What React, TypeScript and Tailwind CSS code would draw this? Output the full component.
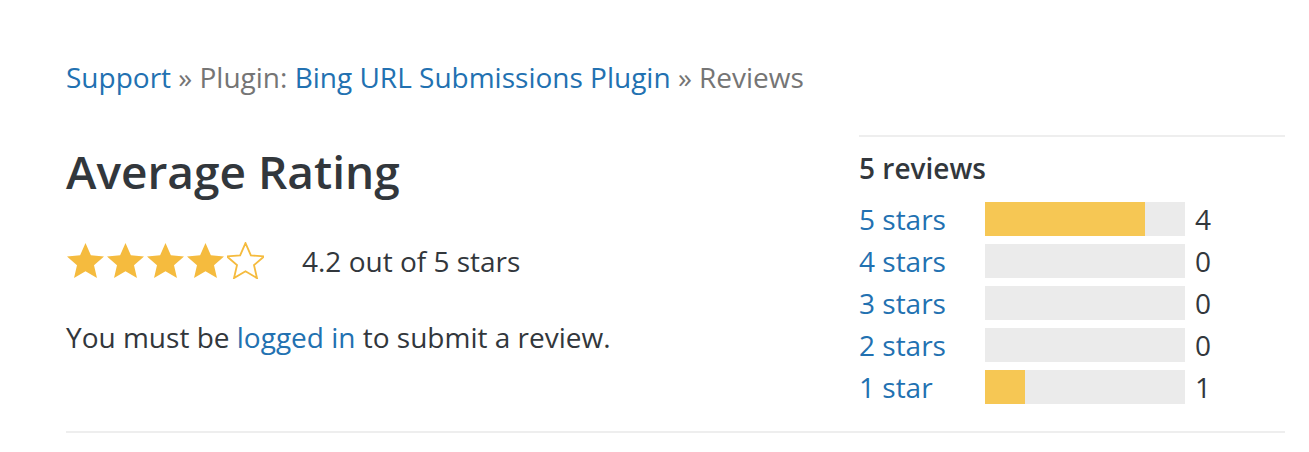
import React from "react";

const ratings = [
  { label: "5 stars", count: 4 },
  { label: "4 stars", count: 0 },
  { label: "3 stars", count: 0 },
  { label: "2 stars", count: 0 },
  { label: "1 star", count: 1 },
];

const Star: React.FC<{ filled: boolean }> = ({ filled }) => (
  <svg width="37" height="37" viewBox="2 1.6 20 20" className="block">
    <path
      d="M12 2.2l2.9 6.6 7.1.6-5.4 4.7 1.6 7-6.2-3.7-6.2 3.7 1.6-7L2 9.4l7.1-.6z"
      fill={filled ? "#f5bb3e" : "none"}
      stroke="#f5bb3e"
      strokeWidth={filled ? 0 : 1}
      strokeLinejoin="miter"
    />
  </svg>
);

export default function App() {
  const total = ratings.reduce((s, r) => s + r.count, 0);
  return (
    <div className="w-[1309px] h-[452px] bg-white pl-[66px] pr-[24px] pt-[57px] font-['Open_Sans',sans-serif] text-[#32373c]">
      <nav className="text-[28px] leading-[40px] text-[#757575]">
        <a className="text-[#2271b1]">Support</a> » Plugin:{" "}
        <a className="text-[#2271b1]">Bing URL Submissions Plugin</a> » Reviews
      </nav>

      <div className="flex justify-between mt-[38px]">
        <div className="pt-[6px]">
          <h1 className="text-[46px] leading-[60px] font-semibold text-[#32373c]">
            Average Rating
          </h1>
          <div className="flex items-center mt-[41px]">
            <div className="flex gap-[3px] pl-[1px]">
              {[0, 1, 2, 3, 4].map((i) => (
                <Star key={i} filled={i < 4} />
              ))}
            </div>
            <span className="ml-[38px] text-[28px] leading-[36px]">4.2 out of 5 stars</span>
          </div>
          <p className="mt-[38px] text-[28px] leading-[40px]">
            You must be <a className="text-[#2271b1]">logged in</a> to submit a review.
          </p>
        </div>

        <div className="w-[426px] border-t-2 border-[#eeeeee] pt-[12px]">
          <h2 className="text-[28px] leading-[38px] font-semibold">{total} reviews</h2>
          <ul className="mt-[15px] flex flex-col gap-[8px]">
            {ratings.map((r) => (
              <li key={r.label} className="flex items-center h-[34px]">
                <a className="w-[126px] text-[28px] leading-[34px] text-[#2271b1]">{r.label}</a>
                <div className="w-[200px] h-[34px] bg-[#ebebeb]">
                  <div
                    className="h-full bg-[#f6c754]"
                    style={{ width: `${(r.count / total) * 100}%` }}
                  />
                </div>
                <span className="ml-[10px] text-[28px] leading-[34px]">{r.count}</span>
              </li>
            ))}
          </ul>
        </div>
      </div>

      <div className="mt-[27px] border-t-2 border-[#eeeeee]" />
    </div>
  );
}
